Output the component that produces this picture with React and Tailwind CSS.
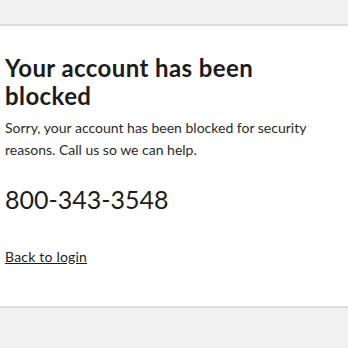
export default function App() {
  return (
    <div
      className="flex h-[348px] w-[348px] flex-col bg-[#f1f1f1] text-[#1c1c1c]"
      style={{ fontFamily: "Lato, 'Open Sans', sans-serif" }}
    >
      <div className="h-[24px] shrink-0" />
      <main className="flex h-[284px] shrink-0 flex-col border-y-2 border-[#dcdcdc] bg-white px-[5px] pt-[28px]">
        <h1 className="w-[300px] text-[24px] font-bold leading-[28px] tracking-[0.4px]">
          Your account has been blocked
        </h1>
        <p className="mt-[7px] w-[320px] text-[14px] leading-[22px] text-[#2a2a2a]">
          Sorry, your account has been blocked for security reasons. Call us so
          we can help.
        </p>
        <p className="mt-[22px] text-[25px] leading-[32px]">800-343-3548</p>
        <a href="#" className="mt-[32px] self-start text-[14px] leading-[20px] tracking-[0.2px] underline">
          Back to login
        </a>
      </main>
    </div>
  );
}
